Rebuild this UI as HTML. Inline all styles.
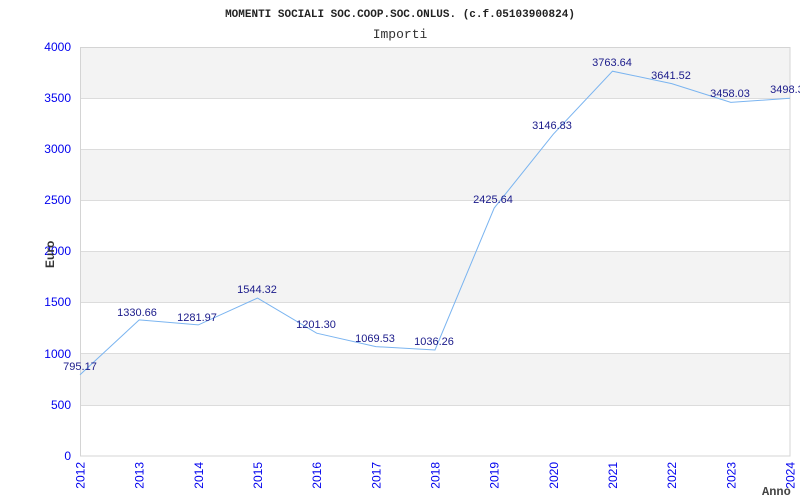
<!DOCTYPE html>
<html><head><meta charset="utf-8"><style>
html,body{margin:0;padding:0;background:#fff;width:800px;height:500px;overflow:hidden}
</style></head><body>
<svg width="800" height="500" xmlns="http://www.w3.org/2000/svg">
<rect x="80" y="47" width="710" height="409" fill="#fff"/>
<rect x="80" y="47" width="710" height="51" fill="#f3f3f3"/>
<rect x="80" y="149" width="710" height="51" fill="#f3f3f3"/>
<rect x="80" y="251" width="710" height="51" fill="#f3f3f3"/>
<rect x="80" y="353" width="710" height="52" fill="#f3f3f3"/>
<g stroke="#dcdcdc" stroke-width="1">
<line x1="80" y1="98.5" x2="790" y2="98.5"/>
<line x1="80" y1="149.5" x2="790" y2="149.5"/>
<line x1="80" y1="200.5" x2="790" y2="200.5"/>
<line x1="80" y1="251.5" x2="790" y2="251.5"/>
<line x1="80" y1="302.5" x2="790" y2="302.5"/>
<line x1="80" y1="353.5" x2="790" y2="353.5"/>
<line x1="80" y1="405.5" x2="790" y2="405.5"/>
</g>
<rect x="80.5" y="47.5" width="709.5" height="408.5" fill="none" stroke="#d4d4d4"/>
<text x="400" y="17" font-family="Liberation Mono,monospace" font-size="11" font-weight="bold" fill="#222" text-anchor="middle">MOMENTI SOCIALI SOC.COOP.SOC.ONLUS. (c.f.05103900824)</text>
<text x="400" y="38" font-family="Liberation Mono,monospace" font-size="13" fill="#333" text-anchor="middle">Importi</text>
<g font-family="Liberation Sans,sans-serif" font-size="12" fill="#0000ee" text-anchor="end">
<text x="71" y="51">4000</text><text x="71" y="102">3500</text><text x="71" y="153">3000</text>
<text x="71" y="204">2500</text><text x="71" y="255">2000</text><text x="71" y="306">1500</text>
<text x="71" y="358">1000</text><text x="71" y="409">500</text><text x="71" y="460">0</text>
</g>
<text transform="translate(54,268) rotate(-90)" font-family="Liberation Sans,sans-serif" font-size="12" font-weight="bold" fill="#333">Euro</text>
<g font-family="Liberation Sans,sans-serif" font-size="12" fill="#0000ee" text-anchor="end">
<text transform="translate(84.5,462) rotate(-90)">2012</text>
<text transform="translate(143.7,462) rotate(-90)">2013</text>
<text transform="translate(202.8,462) rotate(-90)">2014</text>
<text transform="translate(262,462) rotate(-90)">2015</text>
<text transform="translate(321.2,462) rotate(-90)">2016</text>
<text transform="translate(380.3,462) rotate(-90)">2017</text>
<text transform="translate(439.5,462) rotate(-90)">2018</text>
<text transform="translate(498.7,462) rotate(-90)">2019</text>
<text transform="translate(557.8,462) rotate(-90)">2020</text>
<text transform="translate(617,462) rotate(-90)">2021</text>
<text transform="translate(676.2,462) rotate(-90)">2022</text>
<text transform="translate(735.3,462) rotate(-90)">2023</text>
<text transform="translate(794.5,462) rotate(-90)">2024</text>
</g>
<text x="762" y="495" font-family="Liberation Mono,monospace" font-size="12" font-weight="bold" fill="#444">Anno</text>
<polyline fill="none" stroke="#7ab4f0" stroke-width="1" points="80,374.7 139.2,319.9 198.3,324.9 257.5,298.1 316.7,333.2 375.8,346.6 435,350 494.2,208 553.3,134.2 612.5,71.2 671.7,83.6 730.8,102.4 790,98.3"/>
<g font-family="Liberation Sans,sans-serif" font-size="11" fill="#1a1a8a" text-anchor="middle">
<text x="80" y="370">795.17</text>
<text x="137" y="316">1330.66</text>
<text x="197" y="321">1281.97</text>
<text x="257" y="293">1544.32</text>
<text x="316" y="328">1201.30</text>
<text x="375" y="342">1069.53</text>
<text x="434" y="345">1036.26</text>
<text x="493" y="203">2425.64</text>
<text x="552" y="129">3146.83</text>
<text x="612" y="66">3763.64</text>
<text x="671" y="79">3641.52</text>
<text x="730" y="97">3458.03</text>
<text x="790" y="93">3498.30</text>
</g>
</svg>
</body></html>
